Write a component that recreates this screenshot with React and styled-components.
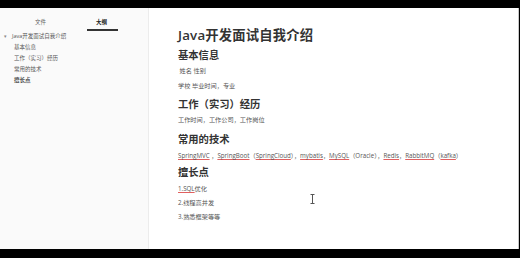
import React from 'react';
import styled, {createGlobalStyle} from 'styled-components';

const GlobalStyle = createGlobalStyle`
  html, body { margin: 0; padding: 0; background: #000; }
  body { font-family: "Open Sans", "Noto Sans CJK SC", sans-serif; }
`;

const Frame = styled.div`
  width: 520px;
  height: 258px;
  display: flex;
  flex-direction: column;
  background: #000;
`;

const Bar = styled.div`
  height: ${props => props.h}px;
  background: #000;
  flex-shrink: 0;
`;

const Window = styled.div`
  flex: 1;
  display: flex;
  background: #fff;
  position: relative;
  border-right: 1px solid #c8c8c8;
  margin-right: 1px;
`;

const Sidebar = styled.div`
  width: 148px;
  background: #fafafa;
  border-right: 1px solid #ececec;
  flex-shrink: 0;
`;

const Tabs = styled.div`
  display: flex;
  padding-left: 10px;
  height: 20px;
  align-items: flex-end;
`;

const Tab = styled.div`
  width: 61px;
  text-align: center;
  font-size: 5.5px;
  line-height: 8px;
  padding-bottom: 2px;
  color: ${props => (props.active ? '#222' : '#666')};
  font-weight: ${props => (props.active ? 700 : 400)};
  position: relative;
  ${props => props.active && `
    &::after {
      content: '';
      position: absolute;
      left: 16px;
      right: 14px;
      bottom: -3px;
      height: 2px;
      background: #333;
    }
  `}
`;

const Outline = styled.div`
  padding-top: 3px;
  display: flex;
  flex-direction: column;
`;

const OutlineItem = styled.div`
  font-size: 5.5px;
  line-height: 11px;
  color: #555;
  padding-left: ${props => props.depth * 14}px;
  font-weight: ${props => (props.bold ? 700 : 400)};
  display: flex;
  align-items: center;
`;

const Caret = styled.span`
  font-size: 5px;
  color: #888;
  width: 8px;
  padding-left: 4px;
`;

const Main = styled.div`
  flex: 1;
  padding: 18px 0 0 29px;
  display: flex;
  flex-direction: column;
  align-items: flex-start;
`;

const Title = styled.h1`
  margin: 0;
  font-size: 13.3px;
  line-height: 18px;
  font-weight: 600;
  color: #333;
  letter-spacing: 0.2px;
`;

const Heading = styled.h2`
  margin: ${props => props.mt}px 0 0;
  font-size: 10.3px;
  line-height: 14px;
  font-weight: 700;
  color: #333;
`;

const Para = styled.p`
  margin: ${props => props.mt}px 0 0;
  font-size: 6.2px;
  line-height: 10px;
  color: #555;
  white-space: nowrap;
`;

const Link = styled.span`
  text-decoration: underline;
  text-decoration-color: #e06060;
  text-underline-offset: 1px;
`;

const Cursor = styled.svg`
  position: absolute;
  left: 310px;
  top: 186px;
`;

const sections = ['基本信息', '工作（实习）经历', '常用的技术', '擅长点'];

export default function App() {
  return (
    <Frame>
      <GlobalStyle />
      <Bar h={8} />
      <Window>
        <Sidebar>
          <Tabs>
            <Tab>文件</Tab>
            <Tab active>大纲</Tab>
          </Tabs>
          <Outline>
            <OutlineItem depth={0}><Caret>▾</Caret>Java开发面试自我介绍</OutlineItem>
            {sections.map((s, i) => (
              <OutlineItem key={s} depth={1} bold={i === sections.length - 1}>{s}</OutlineItem>
            ))}
          </Outline>
        </Sidebar>
        <Main>
          <Title>Java开发面试自我介绍</Title>
          <Heading mt={4}>基本信息</Heading>
          <Para mt={4}>&nbsp;姓名 性别</Para>
          <Para mt={5}>学校 毕业时间，专业</Para>
          <Heading mt={6}>工作（实习）经历</Heading>
          <Para mt={4}>工作时间，工作公司，工作岗位</Para>
          <Heading mt={7}>常用的技术</Heading>
          <Para mt={5}>
            <Link>SpringMVC</Link> ，<Link>SpringBoot</Link>（<Link>SpringCloud</Link>），<Link>mybatis</Link>，<Link>MySQL</Link>（Oracle），<Link>Redis</Link>，<Link>RabbitMQ</Link>（<Link>kafka</Link>）
          </Para>
          <Heading mt={4}>擅长点</Heading>
          <Para mt={5}><Link>1.SQL</Link>优化</Para>
          <Para mt={4}>2.线程高并发</Para>
          <Para mt={4}>3.熟悉框架等等</Para>
        </Main>
        <Cursor width="5" height="10" viewBox="0 0 5 10">
          <path d="M0.5 0.5h4M2.5 0.5v9M0.5 9.5h4" stroke="#555" strokeWidth="1" fill="none" />
        </Cursor>
      </Window>
      <Bar h={9} />
    </Frame>
  );
}
